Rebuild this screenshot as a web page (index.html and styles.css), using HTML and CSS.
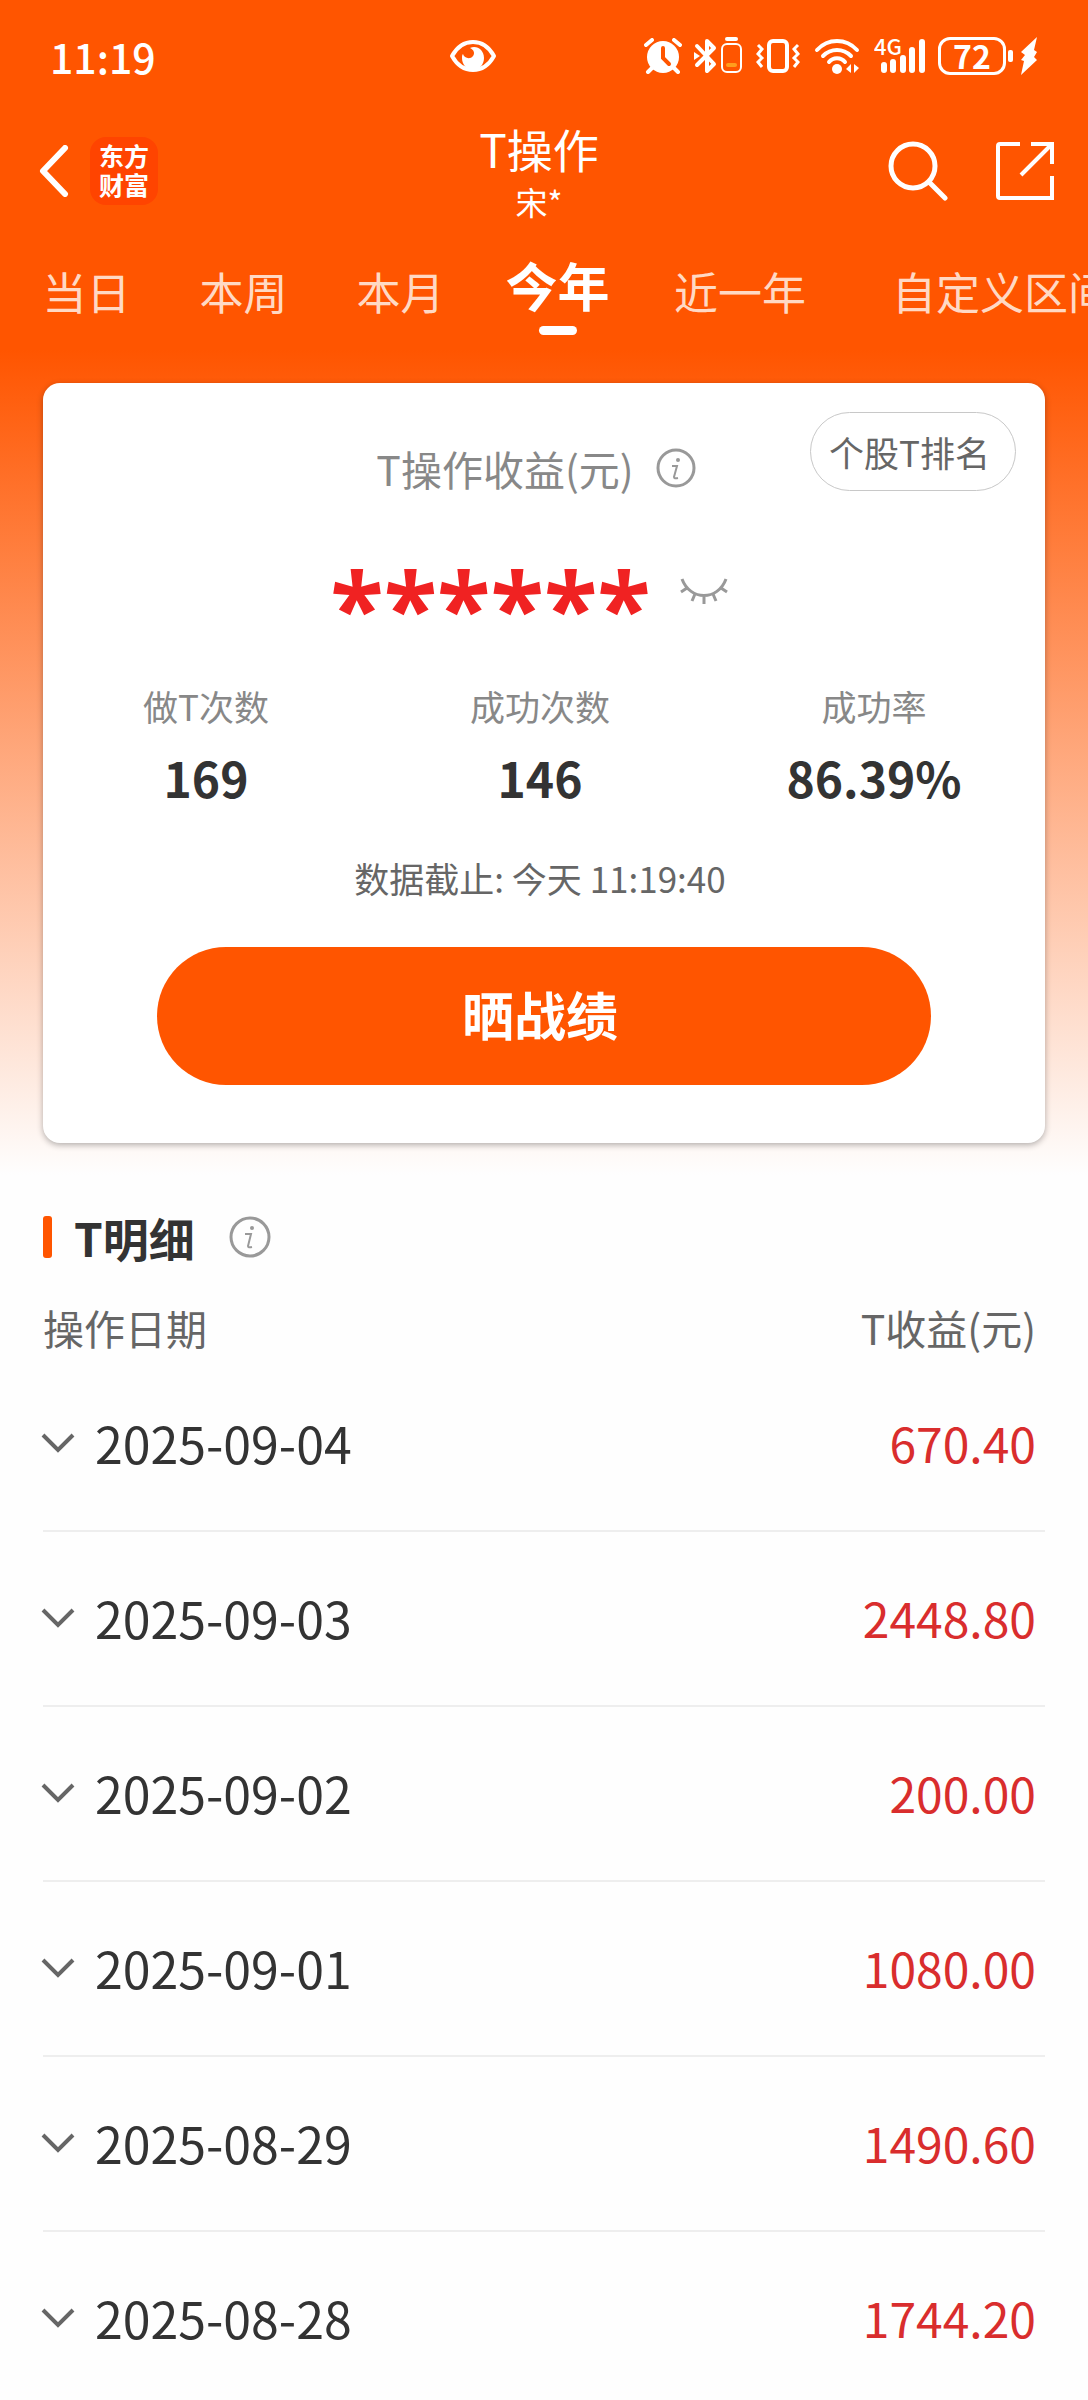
FILE: index.html
```html
<!DOCTYPE html>
<html lang="zh-CN">
<head>
<meta charset="utf-8">
<meta name="viewport" content="width=device-width, initial-scale=1">
<title>T操作</title>
<link rel="stylesheet" href="styles.css">
</head>
<body>
<div class="page">
  <div class="status">
    <span class="status-time">11:19</span>
    <svg class="status-eye" width="48" height="34" viewBox="0 0 48 34" aria-hidden="true">
      <path d="M3 17C8 8 15 3 24 3s16 5 21 14c-5 9-12 14-21 14S8 26 3 17z" fill="none" stroke="#fff" stroke-width="4" stroke-linejoin="round"/>
      <path d="M21 9c7-3 14 2 14 10 0 6-4 11-10 12-7 0-12-5-12-12 0-2 0-3 1-4 1 4 7 6 10 2 2-3 1-6-3-8z" fill="#fff"/>
    </svg>
    <div class="status-icons">
      <svg width="38" height="36" viewBox="0 0 38 36" aria-hidden="true">
        <circle cx="19" cy="19" r="16" fill="#fff"/>
        <path d="M2 7l6-5M36 7l-6-5M8 30l-4 4M30 30l4 4" stroke="#fff" stroke-width="4" stroke-linecap="round"/>
        <path d="M19 10v10l6 6" fill="none" stroke="#ff5500" stroke-width="4" stroke-linecap="round"/>
      </svg>
      <svg class="gap-m" width="50" height="38" viewBox="0 0 50 38" aria-hidden="true">
        <path d="M3 9l17 18-7 7V4l7 7L3 28" fill="none" stroke="#fff" stroke-width="4" stroke-linecap="round" stroke-linejoin="round"/>
        <path d="M0 15l6 4-6 4z" fill="#fff"/>
        <path d="M33 2h9" stroke="#fff" stroke-width="4" stroke-linecap="round"/>
        <rect x="28" y="7" width="19" height="28" rx="5" fill="none" stroke="#fff" stroke-width="2"/>
        <path d="M34 28h7" stroke="#ff9d1c" stroke-width="4" stroke-linecap="round"/>
      </svg>
      <svg class="gap-m" width="44" height="36" viewBox="0 0 44 36" aria-hidden="true">
        <rect x="13" y="3" width="18" height="30" rx="4" fill="none" stroke="#fff" stroke-width="4"/>
        <path d="M2 7l4 4-4 5 4 4-4 4 4 5M42 7l-4 4 4 5-4 4 4 4-4 5" fill="none" stroke="#fff" stroke-width="3"/>
      </svg>
      <svg class="gap-l" width="46" height="36" viewBox="0 0 46 36" aria-hidden="true">
        <path d="M3 12c11-12 29-12 40 0M9 18c8-8 20-8 28 0M15 24c4-5 12-5 16 0" fill="none" stroke="#fff" stroke-width="4" stroke-linecap="round"/>
        <circle cx="23" cy="31" r="5" fill="#fff"/>
        <path d="M37 26v9l-5-4zM40 26l5 4-5 5z" fill="#fff"/>
      </svg>
      <svg class="gap-l" width="52" height="56" viewBox="0 -10 52 56" role="img" aria-label="4G">
        <text class="net-label" x="0" y="17">4G</text>
        <path d="M10 27v5M19 24v8M29 20v12M38 12v20M48 4v28" stroke="#fff" stroke-width="6" stroke-linecap="round"/>
      </svg>
      <span class="battery">72</span>
      <span class="battery-tip"></span>
      <svg class="gap-s" width="16" height="38" viewBox="0 0 16 38" aria-hidden="true">
        <path d="M16 0L0 15l4 3-4 5 3 1-3 14 16-15-3-3 3-5-3-2z" fill="#fff"/>
      </svg>
    </div>
  </div>

  <header class="header">
    <div class="header-left">
      <button class="icon-btn back" type="button" aria-label="返回">
        <svg width="30" height="52" viewBox="0 0 30 52"><path d="M26 3L4 26l22 23" fill="none" stroke="#fff" stroke-width="6" stroke-linejoin="round" stroke-linecap="round"/></svg>
      </button>
      <a class="app-logo" href="#">东方<br>财富</a>
    </div>
    <div class="header-title">
      <h1>T操作</h1>
      <p>宋*</p>
    </div>
    <div class="header-right">
      <button class="icon-btn" type="button" aria-label="搜索">
        <svg width="60" height="60" viewBox="0 0 60 60"><circle cx="25" cy="25" r="22" fill="none" stroke="#fff" stroke-width="5"/><path d="M41 41l16 16" stroke="#fff" stroke-width="5" stroke-linecap="round"/></svg>
      </button>
      <button class="icon-btn" type="button" aria-label="分享">
        <svg width="58" height="58" viewBox="0 0 58 58"><path d="M24 2H4a2 2 0 0 0-2 2v50a2 2 0 0 0 2 2h52V34M35 2h21v20M55 3L25 33" fill="none" stroke="#fff" stroke-width="4"/></svg>
      </button>
    </div>
  </header>

  <nav class="tabs" aria-label="时间区间">
    <button class="tab" type="button">当日</button>
    <button class="tab" type="button">本周</button>
    <button class="tab" type="button">本月</button>
    <button class="tab tab-active" type="button">今年</button>
    <button class="tab tab-wide" type="button">近一年</button>
    <button class="tab tab-custom" type="button">自定义区间</button>
  </nav>

  <main>
    <section class="card">
      <div class="card-top">
        <div class="card-label">
          <span>T操作收益(元)</span>
          <button class="icon-btn" type="button" aria-label="T操作收益说明">
            <svg width="40" height="40" viewBox="0 0 40 40"><circle cx="20" cy="20" r="18" fill="none" stroke="#999" stroke-width="3"/><circle cx="22" cy="12" r="2" fill="#999"/><path d="M16 18h5l-3 11q0 2 4 1" fill="none" stroke="#999" stroke-width="2"/></svg>
          </button>
        </div>
        <button class="rank-btn" type="button">个股T排名</button>
      </div>
      <div class="amount">
        <span class="amount-value">******</span>
        <button class="icon-btn amount-eye" type="button" aria-label="显示金额">
          <svg width="48" height="28" viewBox="0 0 48 28"><path d="M2 2c8 22 36 22 44 0M7 11l-6 4M41 11l6 4M15 17l-3 7M33 17l3 7M24 19v8" fill="none" stroke="#999" stroke-width="3"/></svg>
        </button>
      </div>
      <dl class="stats">
        <div><dt>做T次数</dt><dd>169</dd></div>
        <div><dt>成功次数</dt><dd>146</dd></div>
        <div><dt>成功率</dt><dd>86.39%</dd></div>
      </dl>
      <p class="deadline">数据截止: 今天 11:19:40</p>
      <button class="share-btn" type="button">晒战绩</button>
    </section>

    <section class="detail">
      <div class="detail-head">
        <h2>T明细</h2>
        <button class="icon-btn" type="button" aria-label="T明细说明">
          <svg width="42" height="42" viewBox="0 0 42 42"><circle cx="21" cy="21" r="19" fill="none" stroke="#999" stroke-width="3"/><circle cx="23" cy="12" r="2" fill="#999"/><path d="M16 18h6l-3 12q0 2 4 1" fill="none" stroke="#999" stroke-width="2"/></svg>
        </button>
      </div>
      <table class="records">
        <thead>
          <tr><th scope="col">操作日期</th><th scope="col">T收益(元)</th></tr>
        </thead>
        <tbody>
          <tr><td><button class="row-btn" type="button"><svg width="34" height="20" viewBox="0 0 34 20" aria-hidden="true"><path d="M2 2l15 15L32 2"/></svg>2025-09-04</button></td><td>670.40</td></tr>
          <tr><td><button class="row-btn" type="button"><svg width="34" height="20" viewBox="0 0 34 20" aria-hidden="true"><path d="M2 2l15 15L32 2"/></svg>2025-09-03</button></td><td>2448.80</td></tr>
          <tr><td><button class="row-btn" type="button"><svg width="34" height="20" viewBox="0 0 34 20" aria-hidden="true"><path d="M2 2l15 15L32 2"/></svg>2025-09-02</button></td><td>200.00</td></tr>
          <tr><td><button class="row-btn" type="button"><svg width="34" height="20" viewBox="0 0 34 20" aria-hidden="true"><path d="M2 2l15 15L32 2"/></svg>2025-09-01</button></td><td>1080.00</td></tr>
          <tr><td><button class="row-btn" type="button"><svg width="34" height="20" viewBox="0 0 34 20" aria-hidden="true"><path d="M2 2l15 15L32 2"/></svg>2025-08-29</button></td><td>1490.60</td></tr>
          <tr><td><button class="row-btn" type="button"><svg width="34" height="20" viewBox="0 0 34 20" aria-hidden="true"><path d="M2 2l15 15L32 2"/></svg>2025-08-28</button></td><td>1744.20</td></tr>
        </tbody>
      </table>
    </section>
  </main>
</div>
</body>
</html>
```
FILE: styles.css
```css
* { box-sizing: border-box; }

body, h1, h2, p, dl, dd { margin: 0; }

body {
  background: #fefefe;
  color: #333;
  font-family: "Noto Sans CJK SC", "Noto Sans", sans-serif;
}

button {
  margin: 0;
  padding: 0;
  border: 0;
  background: none;
  color: inherit;
  font: inherit;
  cursor: pointer;
}

svg { display: block; }

.page {
  min-height: 100vh;
  overflow: hidden;
  background: linear-gradient(#ff5500 350px, #fefefe 1175px);
}

.icon-btn { flex: none; }

/* Status bar */
.status {
  display: grid;
  grid-template-columns: 1fr auto 1fr;
  align-items: center;
  height: 112px;
  padding: 0 51px 0 50px;
  color: #fff;
}

.status-time {
  font-size: 41px;
  font-weight: 500;
  line-height: 54px;
}

.status-eye { margin-right: 142px; }

.status-icons {
  display: flex;
  align-items: center;
  justify-content: flex-end;
}

.status-icons > * { flex: none; }

.gap-s { margin-left: 8px; }
.gap-m { margin-left: 12px; }
.gap-l { margin-left: 14px; }

.net-label {
  fill: #fff;
  font-size: 22px;
  font-weight: 500;
}

.battery {
  width: 68px;
  height: 38px;
  margin-left: 12px;
  border: 3px solid #fff;
  border-radius: 12px;
  font-size: 32px;
  font-weight: 700;
  line-height: 30px;
  text-align: center;
}

.battery-tip {
  width: 5px;
  height: 12px;
  margin-left: 2px;
  border-radius: 2px;
  background: #fff;
}

/* Title bar */
.header {
  display: grid;
  grid-template-columns: 1fr auto 1fr;
  align-items: center;
  height: 118px;
  padding: 0 34px 0 24px;
  color: #fff;
}

.header-left,
.header-right {
  display: flex;
  align-items: center;
}

.header-left { gap: 6px; }

.header-right {
  justify-content: flex-end;
  gap: 48px;
}

.back { padding: 0 15px; }

.app-logo {
  width: 68px;
  height: 68px;
  padding-top: 4px;
  border-radius: 16px;
  background: #ff4400;
  color: #fff;
  font-size: 25px;
  font-weight: 700;
  line-height: 29px;
  text-align: center;
  text-decoration: none;
}

.header-title { text-align: center; }

.header-title h1 {
  font-size: 46px;
  font-weight: 400;
  line-height: 60px;
}

.header-title p {
  font-size: 32px;
  line-height: 46px;
}

/* Period tabs */
.tabs {
  display: flex;
  align-items: flex-start;
  padding: 19px 0 0 8px;
  overflow: hidden;
}

.tab {
  flex: none;
  width: 157px;
  padding-top: 12px;
  color: #ffd9c4;
  font-size: 44px;
  line-height: 60px;
  white-space: nowrap;
}

.tab-wide { width: 208px; }
.tab-custom { width: 316px; }

.tab-active {
  padding-top: 0;
  color: #fff;
  font-size: 52px;
  font-weight: 700;
  line-height: 72px;
}

.tab-active::after {
  content: "";
  display: block;
  width: 38px;
  height: 9px;
  margin: 5px auto 0;
  border-radius: 5px;
  background: #fff;
}

/* Summary card */
.card {
  margin: 48px 43px 0;
  padding: 29px 0 58px;
  border-radius: 17px;
  background: #fff;
  box-shadow: 0 2px 6px rgba(0, 0, 0, 0.3);
}

.card-top {
  display: grid;
  grid-template-columns: 1fr auto 1fr;
  align-items: start;
  padding: 0 29px 0 13px;
}

.card-label {
  grid-column: 2;
  display: flex;
  align-items: center;
  gap: 22px;
  padding-top: 26px;
  color: #888;
  font-size: 41px;
  line-height: 60px;
}

.rank-btn {
  justify-self: end;
  height: 79px;
  padding: 0 25px 0 18px;
  border: 1px solid #c8c8c8;
  border-radius: 40px;
  color: #666;
  font-size: 35px;
  line-height: 50px;
}

.amount {
  display: flex;
  align-items: flex-start;
  justify-content: center;
  gap: 29px;
  margin-top: 58px;
  padding-right: 30px;
}

.amount-value {
  color: #f02222;
  font-family: "Open Sans", "Noto Sans", sans-serif;
  font-size: 98px;
  font-weight: 700;
  line-height: 100px;
}

.amount-eye { margin-top: 21px; }

.stats {
  display: grid;
  grid-template-columns: repeat(3, 1fr);
  margin: 25px 4px 0 -4px;
  text-align: center;
}

.stats dt {
  color: #888;
  font-size: 35px;
  line-height: 50px;
}

.stats dd {
  margin-top: 16px;
  font-size: 48px;
  font-weight: 700;
  line-height: 60px;
}

.deadline {
  margin-top: 46px;
  padding-right: 8px;
  color: #666;
  font-size: 35px;
  line-height: 50px;
  text-align: center;
}

.share-btn {
  display: block;
  width: calc(100% - 228px);
  height: 138px;
  margin: 44px auto 0;
  padding: 0 8px 4px 0;
  border-radius: 69px;
  background: #ff5500;
  color: #fff;
  font-size: 52px;
  font-weight: 700;
  line-height: 72px;
}

/* Detail list */
.detail { margin: 62px 43px 0; }

.detail-head {
  display: flex;
  align-items: center;
  gap: 34px;
}

.detail-head h2 {
  display: flex;
  align-items: center;
  gap: 22px;
  font-size: 46px;
  font-weight: 700;
  line-height: 64px;
}

.detail-head h2::before {
  content: "";
  width: 9px;
  height: 42px;
  border-radius: 3px;
  background: #ff5500;
}

.records {
  width: 100%;
  margin-top: 28px;
  border-collapse: separate;
  border-spacing: 0;
}

.records th {
  padding: 0;
  color: #666;
  font-size: 41px;
  font-weight: 400;
  line-height: 60px;
  text-align: left;
}

.records td {
  padding: 55px 0 57px;
  border-bottom: 2px solid #eee;
  line-height: 61px;
}

.records th:last-child,
.records td:last-child {
  padding-right: 9px;
  text-align: right;
}

.records td:last-child {
  color: #d92d2d;
  font-size: 48px;
}

.records tr:last-child td {
  padding-bottom: 44px;
  border-bottom: 0;
}

.row-btn {
  display: flex;
  align-items: center;
  gap: 20px;
  margin-left: -2px;
  font-size: 50px;
  line-height: 61px;
}

.row-btn path {
  fill: none;
  stroke: #666;
  stroke-width: 4;
}
```
